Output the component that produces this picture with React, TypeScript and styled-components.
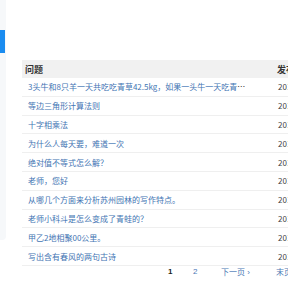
import React from 'react'
import styled, { createGlobalStyle } from 'styled-components'

type Question = {
  title: string,
  date: string
}

const questions: Question[] = [
  { title: '3头牛和8只羊一天共吃吃青草42.5kg，如果一头牛一天吃青草每只羊一天吃青草多少', date: '2017-03-12' },
  { title: '等边三角形计算法则', date: '2017-03-11' },
  { title: '十字相乘法', date: '2017-03-10' },
  { title: '为什么人每天要，难道一次', date: '2017-03-09' },
  { title: '绝对值不等式怎么解？', date: '2017-03-08' },
  { title: '老师，您好', date: '2017-03-07' },
  { title: '从哪几个方面来分析苏州园林的写作特点。', date: '2017-03-06' },
  { title: '老师小科斗是怎么变成了青蛙的？', date: '2017-03-05' },
  { title: '甲乙2地相聚00公里。', date: '2017-03-04' },
  { title: '写出含有春风的两句古诗', date: '2017-03-03' },
]

const GlobalStyle = createGlobalStyle`
  html, body {
    margin: 0;
    padding: 0;
    background: #fff;
    overflow: hidden;
  }
  body {
    font-family: "Noto Sans CJK SC", "Liberation Sans", sans-serif;
  }
`

const Page = styled.div`
  display: flex;
  width: 288px;
  height: 288px;
  overflow: hidden;
`
const Sidebar = styled.aside`
  flex: 0 0 6px;
  height: 240px;
  padding-top: 30px;
  box-sizing: border-box;
  background: #f6f8fa;
  border-bottom-right-radius: 4px;
`
const ActiveItem = styled.div`
  height: 23px;
  width: 5px;
  background: #1a8cf0;
`
const Content = styled.main`
  flex: 0 0 360px;
  margin-left: 16px;
  padding-top: 60px;
`
const Row = styled.div<{ head?: boolean }>`
  display: flex;
  align-items: center;
  height: ${p => (p.head ? '18px' : '18.8px')};
  background: ${p => (p.head ? '#f1f1f1' : '#fff')};
  border-bottom: ${p => (p.head ? 'none' : '1px solid #efefef')};
  box-sizing: border-box;
  font-size: ${p => (p.head ? '9px' : '8px')};
  font-weight: ${p => (p.head ? 700 : 400)};
  color: #333;
`
const TitleCell = styled.div<{ head?: boolean }>`
  flex: 0 0 250px;
  box-sizing: border-box;
  padding-left: ${p => (p.head ? '3px' : '6px')};
  padding-right: 26px;
  white-space: nowrap;
  overflow: hidden;
  text-overflow: ellipsis;
`
const Link = styled.a`
  color: #4274b3;
  text-decoration: none;
`
const DateCell = styled.div<{ head?: boolean }>`
  padding-left: ${p => (p.head ? '5px' : '6px')};
  color: ${p => (p.head ? '#333' : '#444')};
  white-space: nowrap;
`
const Pager = styled.div`
  display: flex;
  align-items: center;
  height: 12px;
  padding-left: 146px;
  font-size: 8px;
`
const PageLink = styled.a<{ current?: boolean, width: number }>`
  width: ${p => p.width}px;
  flex: 0 0 auto;
  color: ${p => (p.current ? '#222' : '#4a78b5')};
  font-weight: ${p => (p.current ? 700 : 400)};
  font-family: "Liberation Sans", "Noto Sans CJK SC", sans-serif;
  text-decoration: none;
`

function App() {
  return (
    <Page>
      <GlobalStyle />
      <Sidebar>
        <ActiveItem />
      </Sidebar>
      <Content>
        <Row head>
          <TitleCell head>问题</TitleCell>
          <DateCell head>发布时间</DateCell>
        </Row>
        {questions.map((q, i) => (
          <Row key={i}>
            <TitleCell>
              <Link href="#">{q.title}</Link>
            </TitleCell>
            <DateCell>{q.date}</DateCell>
          </Row>
        ))}
        <Pager>
          <PageLink current width={25}>1</PageLink>
          <PageLink width={28}>2</PageLink>
          <PageLink width={55}>下一页 ›</PageLink>
          <PageLink width={30}>末页</PageLink>
        </Pager>
      </Content>
    </Page>
  )
}

export default App
